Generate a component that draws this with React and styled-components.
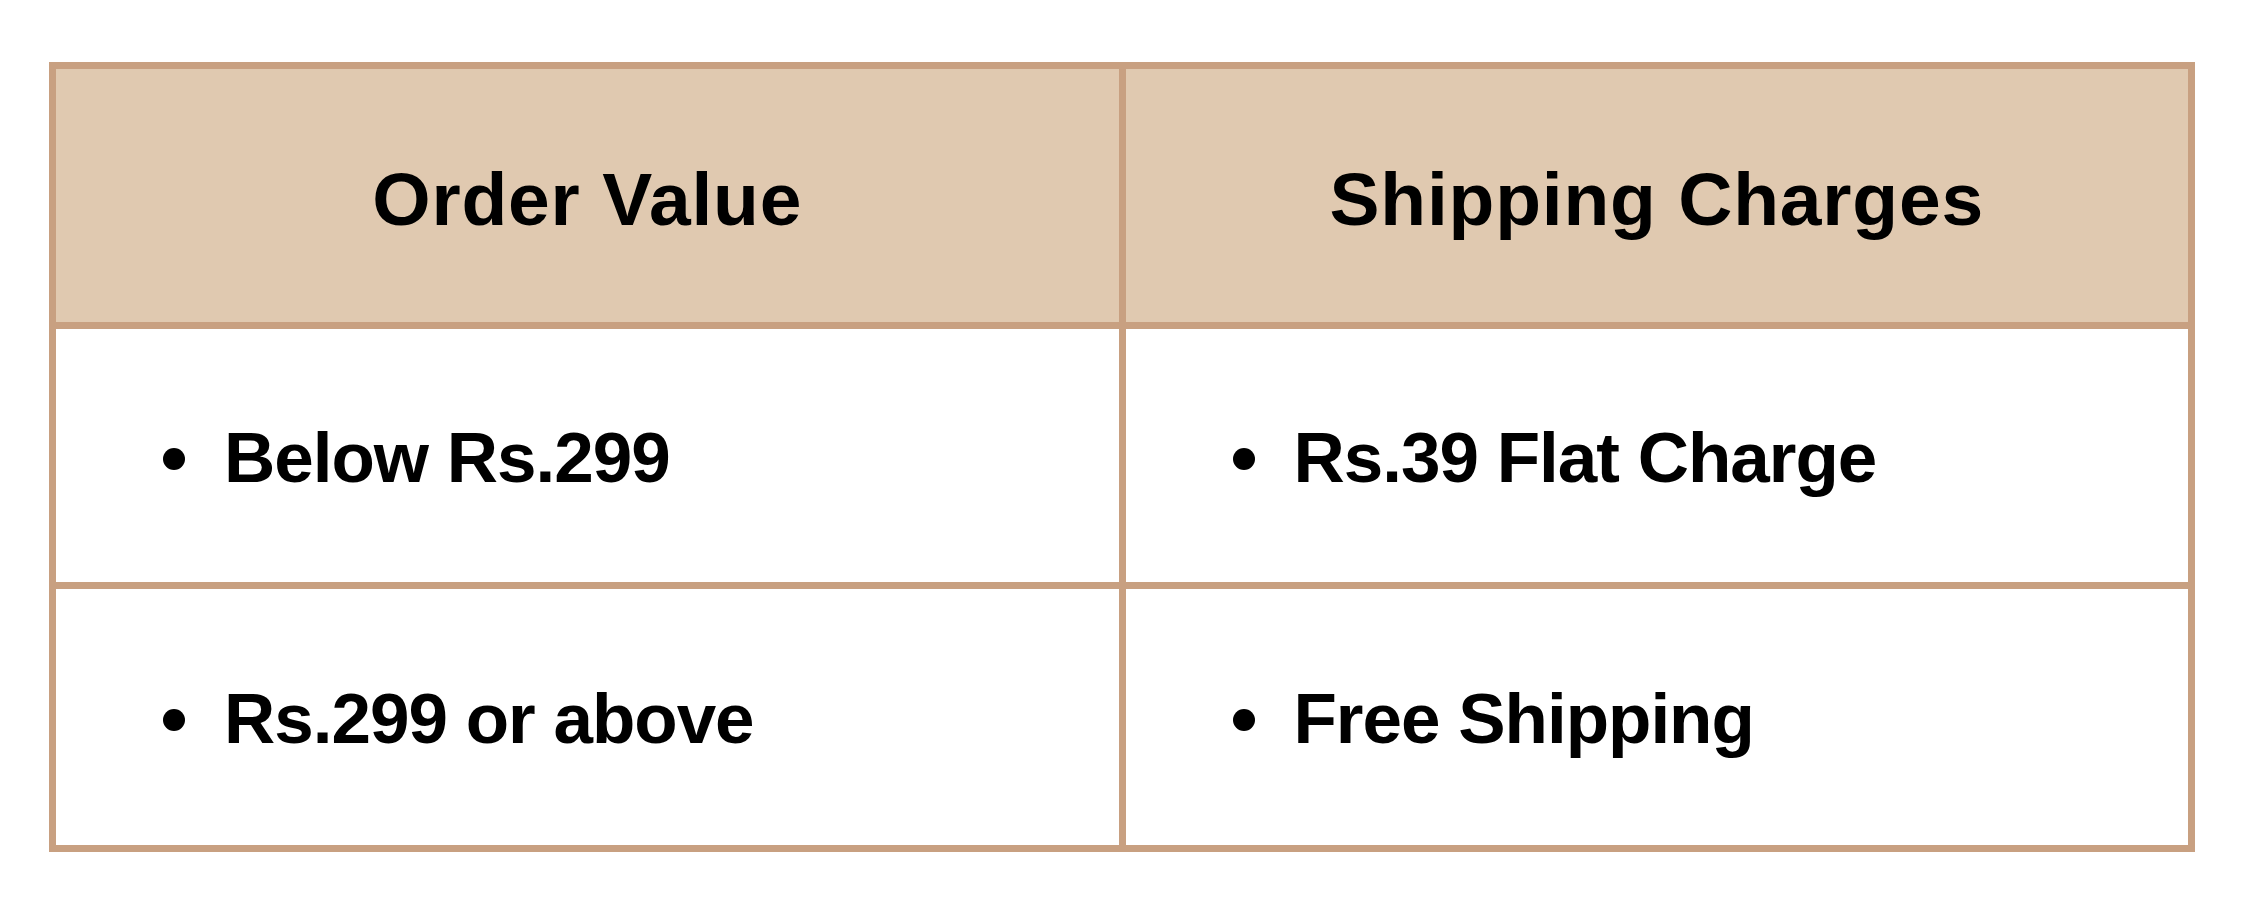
import React from "react";
import styled, { createGlobalStyle } from "styled-components";

const GlobalStyle = createGlobalStyle`
  html, body {
    margin: 0;
    padding: 0;
    background: #ffffff;
  }
  body {
    font-family: "Liberation Sans", Arial, Helvetica, sans-serif;
    color: #000;
  }
`;

const rows = [
  ["Below Rs.299", "Rs.39 Flat Charge"],
  ["Rs.299 or above", "Free Shipping"],
];

export default function App() {
  return (
    <>
      <GlobalStyle />
      <Page>
        <Table>
          <HeadCell>Order Value</HeadCell>
          <HeadCell>Shipping Charges</HeadCell>
          {rows.map((row, i) =>
            row.map((text, j) => (
              <Cell key={`${i}-${j}`}>
                <Dot />
                <CellText>{text}</CellText>
              </Cell>
            ))
          )}
        </Table>
      </Page>
    </>
  );
}

const Page = styled.div`
  padding: 62px 0 0 49px;
  height: 900px;
  box-sizing: border-box;
`;

const Table = styled.div`
  width: 2146px;
  box-sizing: border-box;
  display: grid;
  grid-template-columns: 1fr 1fr;
  grid-template-rows: 253px 253px 256px;
  gap: 7px;
  padding: 7px;
  background: #c8a081;
`;

const HeadCell = styled.div`
  background: #e0c9b0;
  display: flex;
  align-items: center;
  justify-content: center;
  font-weight: 700;
  font-size: 75px;
  letter-spacing: 0.8px;
  padding-top: 7px;
`;

const Cell = styled.div`
  background: #ffffff;
  display: flex;
  align-items: center;
  padding: 3px 0 0 107px;
  gap: 39px;
`;

const Dot = styled.span`
  width: 22px;
  height: 22px;
  margin-top: 3px;
  border-radius: 50%;
  background: #000;
  flex-shrink: 0;
`;

const CellText = styled.span`
  font-weight: 700;
  font-size: 71px;
  letter-spacing: -1px;
  line-height: 1;
`;
